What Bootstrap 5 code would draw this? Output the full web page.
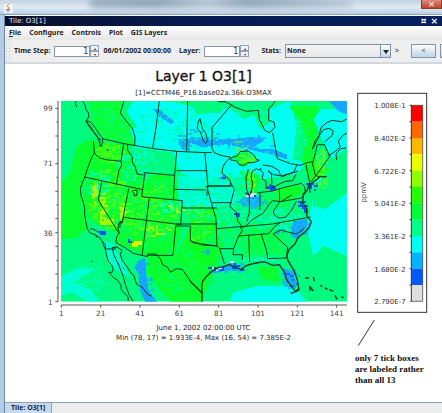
<!DOCTYPE html>
<html lang="en">
<head>
<meta charset="utf-8">
<meta name="viewport" content="width=device-width, initial-scale=1">
<title>Tile: O3[1]</title>
<link href="https://cdn.jsdelivr.net/npm/bootstrap@5.3.0/dist/css/bootstrap.min.css" rel="stylesheet">
<style>
body{font-family:"DejaVu Sans",sans-serif;font-size:8px;line-height:10px;color:#222;background:#fff}
.ui-font{font-family:"Noto Sans","Open Sans",sans-serif;font-weight:700;font-size:7px}
.glass{height:15px;background:linear-gradient(#c3d3e2,#dfe9f2 55%,#b9cfe4);border-bottom:1px solid #8fa5ba;position:relative;overflow:hidden}
.glass-smear{position:absolute;left:90px;right:90px;top:-3px;height:11px;background:linear-gradient(90deg,#9db0c2,#8da3b8 25%,#b7c6d4 45%,#8fa6bc 60%,#bccbd8);filter:blur(3px)}
.glass svg{position:relative}
.win-close{position:relative;width:21px;height:9px;line-height:8px;font-size:9px;color:#fff;border:1px solid #8c3b30;border-top:0;background:linear-gradient(#dc8d80,#c2402b)}
.frame{border-left:4px solid #b3cce6;box-shadow:inset 1px 0 #6f87a5;padding-left:1px}
.titlebar{height:10px;margin-top:1px;background:linear-gradient(90deg,#0b0f28,#061a4f 40%,#04205f);color:#e8ecf4}
.titlebar button{color:#fff;font:bold 9px/9px "DejaVu Sans",sans-serif;background:none;border:0;padding:0}
.menubar{height:14px;background:linear-gradient(#fff,#e6e6e6)}
.menubar a{color:#222;text-decoration:none}
.toolbar{height:24px;background:#eee;border-bottom:2px solid #d3d8de;overflow:hidden}
.toolbar>*{flex-shrink:0}
.grip{width:5px;height:20px;background:radial-gradient(circle,#b4c6d8 30%,transparent 40%) 0 0/3px 3px}
.toolbar input{width:36px;height:11px;border:1px solid #8797a8;text-align:right;font:8px/9px "DejaVu Sans",sans-serif;padding:0 1px;background:#fff;color:#333}
.spin button{width:9px;height:6px;border:1px solid #95a2b0;background:#eef1f5;padding:0;font-size:4px;line-height:3px;color:#333;display:block}
.stat-box{position:relative;width:106px}
.stat-box select{appearance:none;width:100%;height:14px;border:1px solid #7f93a8;background:linear-gradient(#f4f4f4,#e6e8ea);padding:0 1px;font:inherit;color:#222;display:block;border-radius:0}
.stat-arrow{position:absolute;right:0;top:0;width:11px;height:14px;border:1px solid #7f93a8;background:linear-gradient(#fff,#c3d6e8);pointer-events:none}
.stat-arrow::after{content:"";position:absolute;left:2px;top:5px;border:3px solid transparent;border-top:4px solid #222;border-bottom:0}
.step{height:14px;width:25px;border:1px solid #8397ac;background:linear-gradient(#fff,#bdd2e6);padding:0;line-height:10px;color:#445}
.plot{display:grid;grid-template-columns:325fr 87fr;padding-left:25px}
.plot svg{display:block;width:100%;height:auto}
.plot h1{font-size:14px;line-height:24px;font-weight:400;color:#111;-webkit-text-stroke:.3px #111}
.over-map{padding-left:22px}
.fine{font-size:7px}
.side{padding-top:20px}
.remark{font:bold 9px/11px "Liberation Serif",serif;color:#111}
.tabstrip{height:11px;background:#eceeee;border-top:1px solid #8fa0b4}
.tabstrip button{border:0;border-right:1px solid #8fa0b4;background:#c4daf0;padding:0 6px;line-height:10px;color:#223;font-weight:700}
</style>
<script src="https://cdn.jsdelivr.net/npm/bootstrap@5.3.0/dist/js/bootstrap.bundle.min.js"></script>
</head>
<body class="d-flex flex-column min-vh-100 overflow-hidden">
<header class="glass d-flex justify-content-between align-items-start">
  <span class="glass-smear"></span>
  <svg class="ms-1 mt-1" width="9" height="9" viewBox="0 0 9 9" aria-hidden="true"><rect width="9" height="9" fill="#eef2f6"/><path d="M5 0Q2 2 4 3T4 5" stroke="#df8a3c" fill="none"/><path d="M2 5.500h4M2.500 7h3" stroke="#6a86a8"/></svg>
  <button class="win-close p-0" type="button" aria-label="Close window">×</button>
</header>
<div class="frame d-flex flex-column flex-grow-1">
  <div class="titlebar d-flex justify-content-between align-items-center ps-1">
    <span class="fine">Tile: O3[1]</span>
    <span class="d-flex gap-1 pe-1"><button type="button" aria-label="Detach">¤</button><button type="button" aria-label="Close">×</button></span>
  </div>
  <nav class="menubar ui-font d-flex align-items-center gap-2 ps-1">
    <a href="#"><u>F</u>ile</a><a href="#">Configure</a><a href="#">Controls</a><a href="#">Plot</a><a href="#">GIS Layers</a>
  </nav>
  <div class="toolbar ui-font d-flex align-items-center text-nowrap">
    <span class="grip me-1"></span>
    <label for="ts" class="me-1">Time Step:</label>
    <input id="ts" value="1" size="3">
    <span class="spin"><button type="button" aria-label="Next step">▴</button><button type="button" aria-label="Previous step">▾</button></span>
    <span class="mx-1">06/01/2002 00:00:00</span>
    <label for="ly" class="mx-1">Layer:</label>
    <input id="ly" value="1" size="3">
    <span class="spin"><button type="button" aria-label="Next layer">▴</button><button type="button" aria-label="Previous layer">▾</button></span>
    <label for="st" class="ms-2 me-1 ps-1">Stats:</label>
    <span class="stat-box"><select id="st"><option>None</option></select><span class="stat-arrow"></span></span>
    <span class="mx-1 fw-normal">&gt;</span>
    <button class="step ms-2 me-1" type="button">&lt;</button><button class="step" type="button" aria-label="Next"></button>
  </div>
  <main class="plot flex-grow-1">
    <section>
      <div class="over-map text-center">
        <h1 class="m-0">Layer 1 O3[1]</h1>
        <div class="fine">[1]=CCTM46_P16.base02a.36k.O3MAX</div>
      </div>
      <svg viewBox="0 116 975 664" role="img" aria-label="Ozone map of North America">
        <defs><clipPath id="area"><rect x="93" y="125" width="858" height="602"/></clipPath></defs>
        <g clip-path="url(#area)">
          <rect x="93" y="125" width="858" height="602" fill="#00fa80"/>
          <g id="field"></g>
          <g fill="none" stroke="#063c14" stroke-width="3" stroke-linejoin="round">
            <path d="M139 125l-3 8 4 10M158 125l7 12 3 14 8 10 0 12-4 8-5 4 8 8 8 10 8 14 10 12 4 14 7 8M170 185l10 2 9 10 10 14 8 12 10 12 1 14-6 14-4-12 3-12-10-6-10-14-10-12-8-12z"/>
            <path d="M282 125l-11 36 18 24 18 22 8 24-1 27M388 125l-10 80-10 62M473 125l-3 150M217 238l65 15 88 15 70 8 87 4 18-1M190 245l3 36-6 10-10 24-7 20-5 18-8 18-6 16 2 22 6 16 5 22 0 20 4 22 4 20 9 12 16 6 14 10 6 10 4 12 5 10h32M193 281l16 15 18 5 46 5M281 253l-8 53 2 12-8 14-8 44M293 255l0 18 14 20 0 15 9 16 5 20 20 3M341 340l92 8M345 338l-10 74M440 276l-6 72-4 72M163 353l110 24 66 14M215 367l-10 55 62 100M296 387l-20 105M335 412l122 12-5 72-172-22M433 390l95 2M440 334h92M358 415l-22 175M457 446h104M437 494h125M437 500h44v45l12 6 68 9M437 500l-8 88-78 0-1 5M280 476l-4 14-10 2-2 16 4 12-8 12-2 18 22 12 30 20 42 10 1-8h25l14 16 6 16 15 8 8 15 18-11 18 2 14 20 16 24M270 505v-18h10"/>
            <path d="M218 547l8 10 0 14 8 34 10 10 6 14-4 10-10 0 15 16 12 8 10 14 1 14 20 22 1 12M247 565l14-2 15 10-5 12 6 20 14 16 10 18 10 8 9 28 18 10 15 20 12 6M247 563l4 22 14 30 14 34 8 30 10 26 12 22M230 268l6 7M305 395l16-3 0 16-7 2-3-12"/>
            <path d="M180 508l12 2 10 7M198 530l2 5M185 605l4 3M262 610l6 5M278 625l5 5"/>
            <g transform="translate(480 0)"><path d="M126 135l-60 70 0 62 8 14 22 8 24 4M248 220l14 78 40 15 28 5 22-8 16-3M85 127h22l28 17 35 12 35-3 3 28 8 14 8 18 15 7 16-16-3-16-16-5 0-34 14-16 6-10M30 178l7 30 10 12 6 24-6 8-8-10-7-22-10-12 2-18zM45 282l4 48 5 50-4 30M54 380h68M122 293l-18 20-6 12-2 16 12 10 12 12 3 20M120 297l22-8 8-12 24-2 16 10 10 16 8 2-18 7-16 0-12 8-14-1-8-12-20-4M175 330l-7 26 2 34 7 18 7-8 4-28-5-20 4-16 12-8 8 4 8-6M210 330l10 12-4 16 12 8 0 22 18-16-2-28-10-10 16 12 22 3-6-16-20-12-28-4M244 387l28-15 14-6 22-2 10-20M272 350l34-9 18-5M320 318l-8 20-38 15M348 316l10 50 2 35M367 310l9 38 10 4M382 256l22 0 8 20 8 15-12 16-20 28-10 14-16 18M382 256l-8 34-6 20M367 270l8-25 12-16 6-24 16-14 16-8 30 4 16-8M370 265l18-36 12-18 18-4 12 8-4 14-22 18M415 290l22-15 14-12-6-18 14-17 12-7M440 302l-2-18 14-16 16-2"/></g>
            <g transform="translate(480 360)"><path d="M50 20h72M50 20l14 50h62M64 70l14 48 3 82M81 148l70-6 6 12-12 18-14 36-2 18h28l0 16M121 8l12 22-8 30-6 22 20 16 4 26 14 20 12-4 14-16 12-8 24-14 18-26 10-12 26 3 32-20M166 40l12 4 0 58-8 24M204 40l6 0 0 52M202 40l40-4 26-8 1 40-18 26 0 10 14 12 22-2 18-22 14-26M268 28l66-16 10 10 2 20-12 14-62 11M151 142l96-8 115-21M146 170l90-7 20-23 18-12M176 168l3 80M214 165l16 50 3 23 56-2 4-32-44-40 24-12 20 6 26 6 24-16M90 208h40M81 200l8 8 14 45M81 200l-44-3-35-12"/><path d="M0 305l22 22 14 14 0 30M37 345l-2-22 3-18 12-14 16-15 20-12 16-2 16-7 18 10 20 5 10-10 18-6 30-6 12 0 22 10 20-2 16 24 5 20 14 20 14 16 10-4-5-30-10-28-18-30-4-15 8-20 16-14 10-20 20-16 14-16 6-16-14-18 0-22-12-16 2-28 12-10 4-16 24-16 10-10 20 2" stroke-width="4"/><path d="M302 342l15-5 8-8M345 296h12M370 293l3 12M358 320l12 15M359 325l2 10M391 318l6 4M404 325l8 5M418 330l12 6M435 348l6 12M454 353l8 2" stroke-width="4"/></g>
          </g>
        </g>
        <path id="ticks" d="" fill="none" stroke="#555" stroke-width="3"/>
        <g id="labels" font-size="22" fill="#444"></g>
      </svg>
      <div class="over-map fine text-center mt-1"><div>June 1, 2002 02:00:00 UTC</div><div>Min (78, 17) = 1.933E-4, Max (16, 54) = 7.385E-2</div></div>
    </section>
    <aside class="side">
      <svg viewBox="15 0 261 795" role="img" aria-label="Colour scale in ppmV">
        <rect x="23" y="28" width="207" height="657" fill="#fff" stroke="#333" stroke-width="3"/>
        <g id="scale"></g>
        <text transform="translate(47 325) rotate(-90)" text-anchor="middle" font-size="21" fill="#444">ppmV</text>
        <path d="M73 708L25 785" stroke="#333" stroke-width="3"/>
      </svg>
      <p class="remark m-0 mt-1 text-nowrap">only 7 tick boxes<br>are labeled rather<br>than all 13</p>
    </aside>
  </main>
  <footer class="tabstrip ui-font d-flex"><button type="button">Tile: O3[1]</button></footer>
</div>
<script>
const C={g:'#0cff22',s:'#00fa80',c:'#00fff0',b:'#18a5ff',d:'#0b50ff',l:'#82ff00',y:'#e5ee00',w:'#ddd'};
let seed=7;
const rnd=()=>(seed=(seed*16807)%2147483647)/2147483647;
let out='';
// Solid concentration regions
const area=(k,p,o=k==='g'?.85:1)=>out+=`<polygon shape-rendering="crispEdges" fill="${C[k]}" fill-opacity="${o}" points="${p}"/>`;
// Grid cells scattered inside an ellipse
function cells(k,cx,cy,rx,ry,n,o=.7){
  let d='';
  for(let i=0;i<n;i++){
    const a=rnd()*6.283,r=Math.sqrt(rnd());
    const x=Math.round((cx+Math.cos(a)*r*rx)/6)*6,y=Math.round((cy+Math.sin(a)*r*ry)/6)*6;
    d+=`M${x} ${y}h${rnd()<.5?6:12}v6H${x}z`;
  }
  out+=`<path shape-rendering="crispEdges" fill="${C[k]}" fill-opacity="${o}" d="${d}"/>`;
}
area('g','93,370 120,340 140,260 190,235 185,320 155,380 155,450 180,500 140,535 93,540');
area('g','175,125 280,125 270,160 312,215 312,258 240,245 190,200',.7);
area('g','190,245 285,255 330,345 440,350 440,420 457,500 435,590 340,588 260,550 262,520 200,495 165,470 157,380');
area('g','350,590 440,585 480,500 560,500 580,560 560,620 515,727 420,727 350,640');
area('c','310,125 385,125 440,130 510,150 600,145 640,180 690,160 780,125 800,200 790,300 830,310 800,345 690,360 590,350 500,360 450,340 430,280 315,265 320,200 290,160');
area('s','480,125 600,125 570,160 500,165');
area('s','640,125 720,125 720,190 690,210 670,160');
area('g','775,140 860,140 880,170 850,250 860,320 900,330 840,370 815,300 830,240 810,180');
area('c','850,180 870,150 951,150 951,265 910,300 880,250');
area('c','860,360 951,340 951,590 880,560 850,590 830,510');
area('s','851,380 951,300 951,400 885,450 850,440');
area('b','895,125 951,125 951,165 925,155 910,138');
area('c','440,350 530,350 610,370 620,430 550,450 450,440',.75);
area('g','625,335 660,335 690,350 675,420 660,380');
area('g','480,440 560,445 565,560 540,620 480,600');
area('g','620,520 720,490 760,510 770,590 700,605 640,590',.6);
area('g','680,620 740,625 750,670 700,660');
area('g','740,390 810,375 820,400 750,430');
area('g','605,290 650,275 680,300 640,325');
area('c','610,700 680,680 790,680 830,727 600,727');
area('c','93,650 150,625 190,630 130,670 180,690 210,727 170,727 130,700 93,710',.7);
area('c','300,210 340,200 350,250 315,258');
area('c','218,548 245,550 280,610 300,655 255,630 235,600',.7);
area('b','325,605 345,595 348,640 355,690 380,727 345,727 330,690 325,640 312,625');
area('b','480,232 520,235 550,245 590,240 650,235 690,232 700,246 670,262 690,270 730,270 770,285 770,300 720,285 650,268 590,255 550,258 520,265 480,250');
area('b','370,150 385,148 432,185 425,195 385,170');
area('b','445,240 480,240 480,275 455,270');
area('b','648,405 690,410 690,440 630,435 625,425 648,424');
area('b','790,485 830,480 830,500 800,540 782,530');
area('b','755,625 785,635 800,670 797,690 765,660');
area('b','575,620 610,610 625,635 595,632 550,642 530,640');
cells('c',640,240,200,110,200,.4);cells('s',420,220,130,80,130,.5);cells('b',500,235,70,30,30);
cells('b',630,250,110,25,40);cells('g',230,185,70,55,130,.5);cells('s',230,200,70,60,80,.6);
cells('c',320,320,60,50,90,.6);cells('c',350,210,40,40,35);cells('s',360,440,120,130,320,.6);cells('l',230,420,60,90,130,.5);
cells('c',200,370,40,40,55,.6);cells('l',350,450,90,80,140,.5);cells('l',235,280,40,30,65,.5);
cells('y',215,440,8,50,30);cells('y',190,405,5,30,20);cells('y',225,485,18,12,28);cells('y',317,553,12,9,20,1);cells('y',275,455,10,25,16);
cells('y',380,515,40,22,14);cells('y',438,445,25,10,8);cells('d',209,517,9,4,10,1);cells('d',296,543,3,4,3,1);
cells('c',415,435,30,25,16);cells('b',345,660,20,60,30);cells('g',430,640,60,70,120,.6);cells('s',440,630,60,70,100,.6);
cells('l',505,490,40,60,60,.5);cells('l',625,260,25,15,8,.5);cells('l',648,295,25,15,25,.6);cells('l',660,370,7,35,30);
cells('s',570,450,100,120,340,.6);cells('c',575,420,110,80,230,.5);cells('g',640,520,120,50,150,.5);cells('s',700,545,90,50,160,.6);
cells('c',740,480,90,30,85,.6);cells('b',665,425,45,20,55);cells('c',690,600,60,15,25);cells('g',745,410,55,30,80,.5);
cells('b',600,625,50,14,30);cells('b',805,505,28,28,35);cells('b',775,655,25,28,35);cells('d',780,660,22,24,8);
cells('d',810,430,14,14,11,1);cells('d',825,458,6,12,6,1);cells('d',657,404,14,6,10,1);cells('w',657,405,12,6,9,1);
cells('d',555,627,25,7,8,1);cells('w',551,627,14,6,5,1);cells('d',610,620,16,8,6,1);cells('d',635,628,8,5,4,1);cells('w',602,604,4,6,2,1);
cells('d',718,384,14,6,9,1);cells('d',845,378,18,12,10,1);cells('b',577,354,12,6,7,1);cells('d',577,354,6,4,2,1);cells('d',617,465,5,5,3,1);cells('b',525,575,9,5,6);
cells('c',160,660,70,45,70,.4);cells('l',870,330,18,60,60,.5);cells('b',740,515,25,8,8);
document.getElementById('field').innerHTML=out;
// Axes
let t='M84 125V727M94 737H951';
for(let i=0;i<15;i++){const y=Math.round(147+i*41.43);t+=`M84 ${y}h-${i%2&&i!==9?5:8}`}
for(let i=0;i<8;i++)t+=`M${94+i*118} 737v8`;
document.getElementById('ticks').setAttribute('d',t);
let L='';
[[99,147],[71,312],[36,520],[1,727]].forEach(([v,y])=>L+=`<text x="68" y="${y+9}" text-anchor="end">${v}</text>`);
for(let i=0;i<8;i++)L+=`<text x="${94+i*118}" y="771" text-anchor="middle">${1+i*20}</text>`;
document.getElementById('labels').innerHTML=L;
// Colour scale
let S='';
['#ff0000','#ff6600','#ffb800','#eaff00','#8cff00','#22ff00','#00ff33','#00ff88','#00fff0','#00b4ff','#0058ff','#dedede'].forEach((c,i)=>S+=`<rect x="184" y="${64+i*49}" width="34" height="49" fill="${c}"/><path d="M179 ${64+i*49}h6" stroke="#222" stroke-width="3"/>`);
S+='<path d="M184 64H218V652H179" fill="none" stroke="#333" stroke-width="2"/><path d="M184 64V652" stroke="#333" stroke-width="3"/>';
['1.008E-1','8.402E-2','6.722E-2','5.041E-2','3.361E-2','1.680E-2','2.790E-7'].forEach((v,i)=>S+=`<text x="167" y="${73+i*98}" text-anchor="end" font-size="21" fill="#333">${v}</text>`);
document.getElementById('scale').innerHTML=S;
</script>
</body>
</html>
